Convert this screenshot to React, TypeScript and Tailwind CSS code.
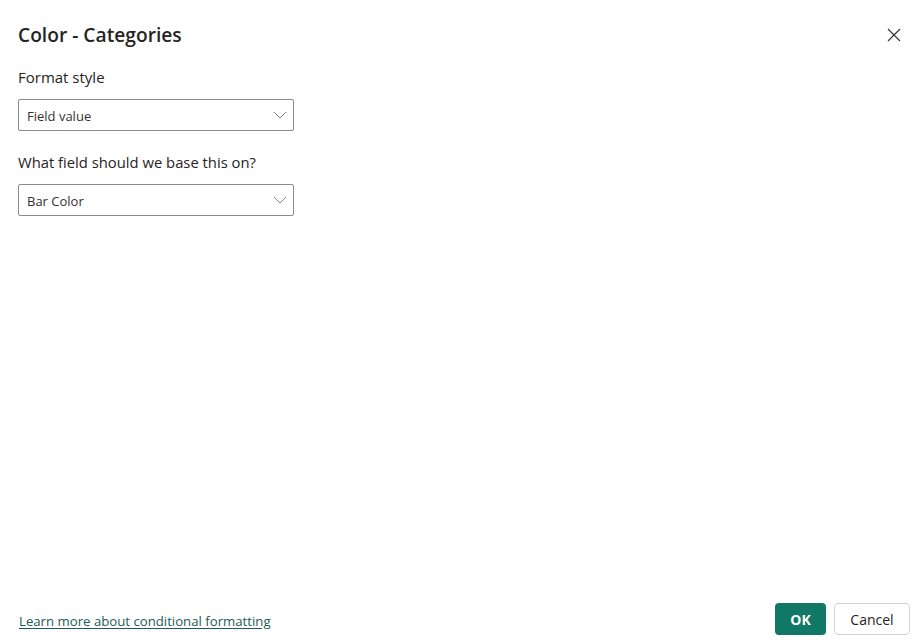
const font = { fontFamily: '"Segoe UI", "Open Sans", "Noto Sans", sans-serif' };

function Dropdown({ value }: { value: string }) {
  return (
    <div className="mt-[11px] flex h-[32px] w-[276px] items-center justify-between rounded-[2px] border border-[#8a8a8a] pl-[8px] pr-[5px]">
      <span className="pt-[3px] text-[13px] text-[#323130]">{value}</span>
      <svg width="14" height="8" viewBox="0 0 14 8" className="mr-[1px]">
        <path d="M1 1 L7 7 L13 1" fill="none" stroke="#7a7876" strokeWidth="0.9" />
      </svg>
    </div>
  );
}

export default function App() {
  return (
    <div
      style={font}
      className="flex h-[643px] w-[921px] flex-col bg-white pb-[8px] pl-[18px] pr-[11px] pt-[22px] text-[#252423]"
    >
      <div className="flex items-center justify-between">
        <h1 className="text-[19.2px] font-semibold leading-[26px]">Color - Categories</h1>
        <svg width="14" height="14" viewBox="0 0 14 14" className="mr-[9px]">
          <path d="M1 1 L13 13 M13 1 L1 13" stroke="#323130" strokeWidth="1.1" />
        </svg>
      </div>

      <div className="mt-[18px] text-[15px] leading-[22px]">Format style</div>
      <Dropdown value="Field value" />

      <div className="mt-[20px] text-[14.8px] leading-[22px]">What field should we base this on?</div>
      <Dropdown value="Bar Color" />

      <div className="mt-auto flex items-center justify-between">
        <a
          href="#"
          className="ml-[1px] mt-[5px] text-[13.2px] text-[#1e5c54] underline underline-offset-2"
        >
          Learn more about conditional formatting
        </a>
        <div className="flex gap-[8px]">
          <button className="h-[32px] w-[51px] rounded-[4px] bg-[#117865] text-[14px] font-bold text-white">
            OK
          </button>
          <button className="h-[32px] w-[76px] rounded-[4px] border border-[#d1d1d1] bg-white text-[14px] text-[#242424]">
            Cancel
          </button>
        </div>
      </div>
    </div>
  );
}
